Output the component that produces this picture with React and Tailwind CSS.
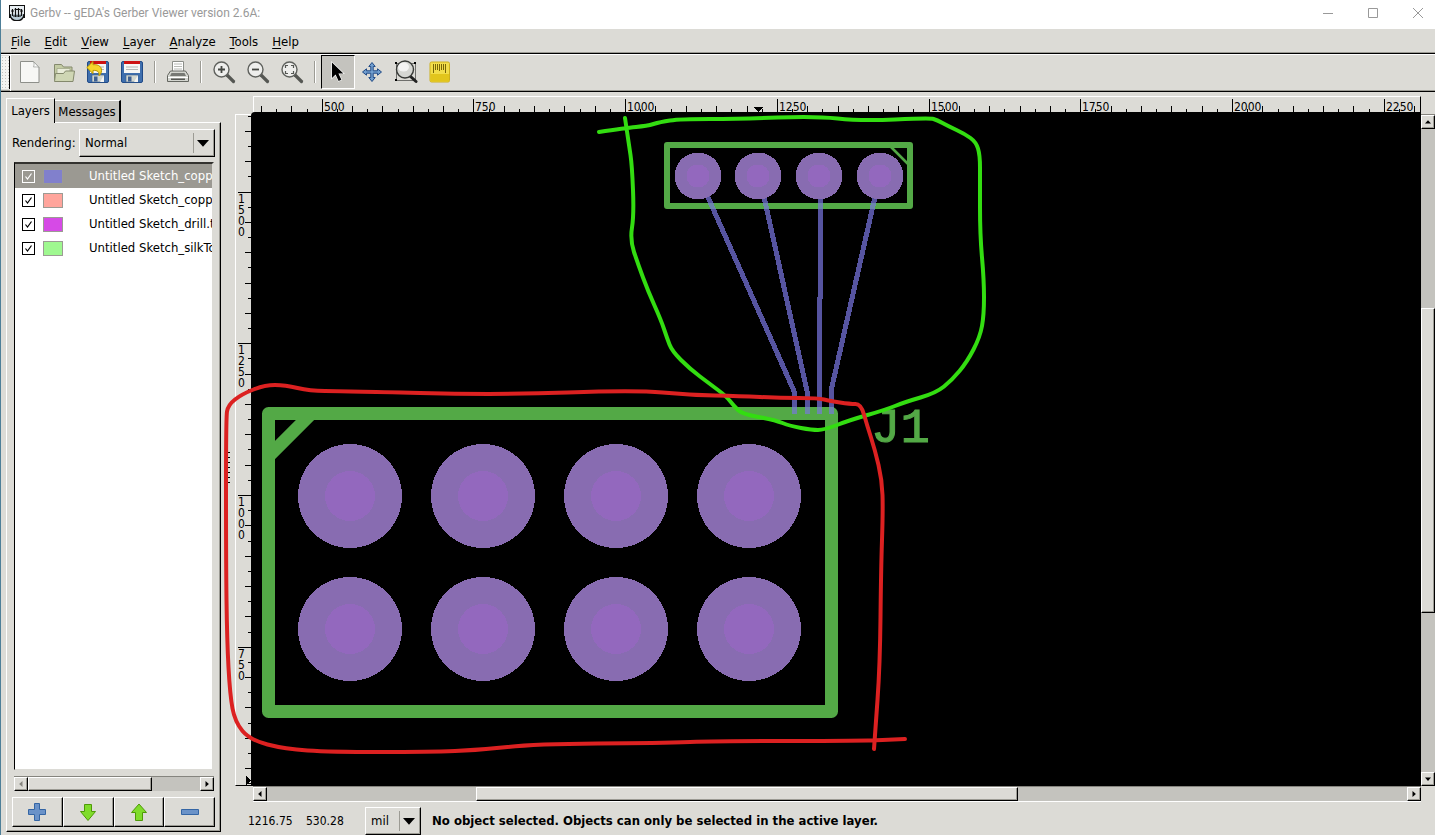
import { useState } from 'react'

const bevel =
  'bg-[#dcdbd6] border border-t-white border-l-white border-b-black border-r-black shadow-[inset_-1px_-1px_#9c9b94]'

const layers = [
  { name: 'Untitled Sketch_copper', swatch: 'bg-[#8180cc]' },
  { name: 'Untitled Sketch_copper', swatch: 'bg-[#ffa59c]' },
  { name: 'Untitled Sketch_drill.txt', swatch: 'bg-[#d64ae6]' },
  { name: 'Untitled Sketch_silkTop', swatch: 'bg-[#9ff890]' },
]

const menus = ['File', 'Edit', 'View', 'Layer', 'Analyze', 'Tools', 'Help']

// 25 mil between two ticks, in pixels
const TICK = 15.172

// freehand strokes, smoothed through the midpoints
function strokePath(points) {
  let d = `M${points[0][0]} ${points[0][1]}`
  for (let i = 1; i < points.length - 1; i++) {
    const [x, y] = points[i]
    const [nx, ny] = points[i + 1]
    d += ` Q${x} ${y} ${(x + nx) / 2} ${(y + ny) / 2}`
  }
  const last = points[points.length - 1]
  return `${d} L${last[0]} ${last[1]}`
}

const greenStroke = [
  [599, 132], [625, 128], [647, 126], [660, 122], [680, 119], [740, 119], [815, 116], [860, 121], [930, 118], [937, 120],
  [948, 126], [965, 134], [976, 142], [980, 155], [980, 180], [980, 235], [984, 280], [984, 315], [980, 337], [967, 362], [952, 380],
  [936, 393], [905, 402], [885, 410], [850, 420], [824, 430], [812, 430], [790, 426], [775, 420], [742, 414], [734, 406],
  [726, 396], [710, 384], [690, 369], [672, 351], [667, 338], [661, 320], [648, 291], [638, 264], [630, 240], [634, 215], [632, 165],
  [629, 145], [625, 118],
]

const redStroke = [
  [874, 749], [875, 735], [880, 665], [881, 570], [883, 510], [882, 480], [875, 450], [867, 425], [861, 404],
  [850, 404], [830, 401], [818, 398], [780, 398], [740, 396], [690, 395], [635, 390], [500, 395], [340, 391], [310, 391], [285, 385],
  [265, 385], [242, 394], [228, 405], [226, 418], [226, 560], [227, 640], [230, 695], [235, 722], [250, 740], [285, 749],
  [330, 752], [430, 752], [480, 750], [535, 744], [660, 743], [720, 741], [860, 741], [905, 739],
]

const traces = [
  'M707 195L794 391V414',
  'M764 197L807 391V414',
  'M820 198V299H819V414',
  'M875 197L831 391V414',
]

function Arrow({ dir = 'down', className = 'w-2 h-2' }) {
  const shapes = {
    down: 'M0 2h8L4 6.500z',
    up: 'M0 6h8L4 1.500z',
    left: 'M6 0v8L1.500 4z',
    right: 'M2 0v8L6.500 4z',
  }
  return (
    <svg viewBox="0 0 8 8" className={className} fill="currentColor">
      <path d={shapes[dir]} />
    </svg>
  )
}

function ScrollButton({ dir, dim }) {
  return (
    <button
      aria-label={`Scroll ${dir}`}
      className={`${bevel} w-3.5 h-3.5 shrink-0 flex items-center justify-center ${dim ? 'text-[#85847e]' : 'text-black'}`}
    >
      <Arrow dir={dir} className="w-1.5 h-1.5" />
    </button>
  )
}

function Dropdown({ label, options, className }) {
  return (
    <div className={`relative ${className}`}>
      <select aria-label={label} className={`${bevel} appearance-none w-full h-full pl-[5px] pr-6 outline-none`}>
        {options.map((o) => (
          <option key={o}>{o}</option>
        ))}
      </select>
      <span className="absolute right-1 inset-y-1 w-[18px] border-l border-[#9c9b94] flex items-center justify-center pointer-events-none">
        <Arrow className="w-3 h-3" />
      </span>
    </div>
  )
}

function Floppy() {
  return (
    <>
      <rect x="1.500" y="1.500" width="21" height="21" rx="1.500" fill="#3f6fae" stroke="#204a87" />
      <rect x="4" y="2" width="16" height="11" fill="#f6f6f4" />
      <rect x="4" y="1" width="16" height="3" fill="#cc1111" />
      <path d="M6 7h12M6 9.500h12" stroke="#b4b6b2" />
      <rect x="6" y="15" width="12" height="7" fill="#d3d7cf" stroke="#385d8c" strokeWidth=".6" />
      <rect x="8" y="16.500" width="3.500" height="5" fill="#3d5f91" />
      <path d="M14 22l4-7v7z" fill="#f4f4f2" />
    </>
  )
}

function Magnifier({ children }) {
  return (
    <>
      <path d="M15 15l6.500 6.500" stroke="#555753" strokeWidth="3.200" strokeLinecap="round" />
      <circle cx="9.500" cy="9.500" r="7.500" fill="#eeeeec" stroke="#5f615d" strokeWidth="1.400" />
      {children}
    </>
  )
}

const icons = {
  New: (
    <>
      <path d="M2.500 1.500h13l5.500 6v15h-18.500z" fill="#f7f7f5" stroke="#8d8f8a" />
      <path d="M15.500 1.500c1 2 .5 4 0 5.500 2 0 4-.3 5.500.5z" fill="#fff" stroke="#a0a29d" strokeWidth=".8" />
    </>
  ),
  Open: (
    <>
      <path d="M2.500 20V4.500h7l2 2.500h8.500v4" fill="#c3cba4" stroke="#84896d" />
      <path d="M5 8.500h13v5H5z" fill="#e9ecd9" stroke="#9a9f83" strokeWidth=".7" />
      <path d="M2.500 21.500l1-8h8l2-2.500h9l-1.500 10.500z" fill="#cfd6b4" stroke="#84896d" />
    </>
  ),
  Revert: (
    <>
      <Floppy />
      <path d="M.8 7.500L7 1.500v3.200c6-.5 9.500 2.500 8.300 7.500-.3 1.500-1.200 2.800-2.300 3.500.6-4-1.500-5.500-6-5.300v3.300z" fill="#f6d62c" stroke="#b89400" />
    </>
  ),
  Save: <Floppy />,
  Print: (
    <>
      <path d="M6.500 12V1.500h11V12" fill="#fff" stroke="#8c8e89" />
      <path d="M8 4h8M8 6.500h8M8 9h8" stroke="#b8bab5" />
      <path d="M4.500 11h15l3 4.500v6h-21v-6z" fill="#d3d5cf" stroke="#646660" />
      <path d="M5.500 13h13l1.500 3H4z" fill="#777974" />
      <path d="M2 17.500h20" stroke="#fff" />
      <rect x="5" y="18.500" width="14" height="1.500" fill="#555753" />
    </>
  ),
  'Zoom in': (
    <Magnifier>
      <path d="M9.500 6v7M6 9.500h7" stroke="#444642" strokeWidth="1.800" />
    </Magnifier>
  ),
  'Zoom out': (
    <Magnifier>
      <path d="M6 9.500h7" stroke="#444642" strokeWidth="1.800" />
    </Magnifier>
  ),
  'Zoom to fit': (
    <Magnifier>
      <path d="M5.500 8V5.500H8M11 5.500h2.500V8M13.500 11v2.500H11M8 13.500H5.500V11" fill="none" stroke="#555753" strokeWidth="1.200" />
    </Magnifier>
  ),
  Select: (
    <path d="M6 2.500v15.500l3.600-3.400 3 6.400 2.800-1.300-3-6.200h5z" fill="#000" stroke="#fff" strokeWidth="1.200" paintOrder="stroke" />
  ),
  Pan: (
    <path
      d="M12 2.500l3.200 4h-2v4.300h4.300v-2l4 3.200-4 3.200v-2h-4.300v4.300h2l-3.200 4-3.200-4h2v-4.300H6.500v2l-4-3.200 4-3.200v2h4.300V6.500h-2z"
      fill="#729fcf"
      stroke="#204a87"
    />
  ),
  'Zoom to area': (
    <>
      <path d="M2.500 3.500h19v17h-19z" fill="none" stroke="#000" strokeDasharray="1 1" />
      <path d="M1 2h2v2H1zM20 2h2v2h-2zM1 19h2v2H1z" fill="#000" />
      <path d="M16 16l6 5.500" stroke="#222" strokeWidth="3" strokeLinecap="round" />
      <circle cx="11" cy="9.500" r="8.500" fill="#d6d7d3" stroke="#383a37" strokeWidth="1.400" />
      <ellipse cx="9.500" cy="7" rx="5.500" ry="4.500" fill="#fff" opacity=".7" />
    </>
  ),
  Measure: (
    <>
      <rect x="2" y="2" width="19.500" height="20" rx="1.500" fill="#f2dd4a" stroke="#cdb01c" />
      <path d="M2.500 14H21v7.500H2.500z" fill="#e2c51c" />
      <path d="M5.500 4v9M7.500 4v6M9.500 4v6M11.500 4v7M13.500 4v6M15.500 4v6M17.500 4v9" stroke="#6a5700" strokeWidth=".9" />
    </>
  ),
}

const toolbarGroups = [
  ['New', 'Open', 'Revert', 'Save'],
  ['Print'],
  ['Zoom in', 'Zoom out', 'Zoom to fit'],
  ['Select', 'Pan', 'Zoom to area', 'Measure'],
]

function Toolbar({ tool, setTool }) {
  return (
    <div className="flex h-[39px] border-t border-black border-b border-b-black shadow-[inset_0_1px_#fff,inset_0_-1px_#9c9b94]">
      <div className="w-[9px] my-0.5 bg-[radial-gradient(#c4c3be_30%,#f4f4f1_35%)] bg-[length:3px_3px] border-r border-black" />
      <div className="flex items-center border-l border-white pl-0.5 pb-px">
        {toolbarGroups.map((group, i) => (
          <div key={i} className="flex items-center">
            {i > 0 && <span className="mx-[5px] w-0.5 h-[22px] border-l border-r border-l-[#9c9b94] border-r-white" />}
            {group.map((name) => (
              <button
                key={name}
                aria-label={name}
                onClick={() => setTool(name)}
                className={`w-[34px] h-[34px] flex items-center justify-center border ${
                  tool === name
                    ? 'bg-[#c4c3be] border-t-black border-l-black border-b-white border-r-white'
                    : 'border-transparent'
                }`}
              >
                <svg viewBox="0 0 24 24" className="w-6 h-6" fill="none">
                  {icons[name]}
                </svg>
              </button>
            ))}
          </div>
        ))}
      </div>
    </div>
  )
}

function TitleBar() {
  return (
    <header className="flex items-center h-[29px] bg-white text-[#999] shrink-0">
      <svg viewBox="0 0 16 16" className="w-4 h-4 ml-2 mb-1" fill="none">
        <rect x=".5" y=".5" width="15" height="12" fill="#e8eef2" stroke="#111" />
        <path d="M1 9c0 9 14 9 14 0" fill="#b9cbd6" stroke="#111" strokeWidth="1.500" />
        <path d="M3.500 4v7M6.500 3v9M9.500 3v9M12.500 4v7M2 6h3M5.500 4.500h3M8.500 4.500h3M11 6h3M4 11h8" stroke="#111" strokeWidth="1.200" />
      </svg>
      <h1 className="ml-[5px] mb-1 text-xs font-[Roboto,sans-serif]">Gerbv -- gEDA's Gerber Viewer version 2.6A:</h1>
      <div className="ml-auto mb-1 flex">
        <button aria-label="Minimize" className="w-[45px] h-6 flex items-center justify-center">
          <svg viewBox="0 0 10 10" className="w-2.5 h-2.5" stroke="currentColor"><path d="M0 5.500h10" /></svg>
        </button>
        <button aria-label="Maximize" className="w-[45px] h-6 flex items-center justify-center">
          <svg viewBox="0 0 10 10" className="w-2.5 h-2.5" stroke="currentColor" fill="none"><path d="M.5.5h9v9h-9z" /></svg>
        </button>
        <button aria-label="Close" className="w-10 h-6 pl-1.5 flex items-center justify-center">
          <svg viewBox="0 0 10 10" className="w-2.5 h-2.5" stroke="currentColor"><path d="M0 0l10 10M10 0L0 10" /></svg>
        </button>
      </div>
    </header>
  )
}

function LayerRow({ layer, selected, onSelect }) {
  const [visible, setVisible] = useState(true)
  return (
    <li
      onClick={onSelect}
      className={`flex items-center h-6 pl-[7px] whitespace-nowrap ${selected ? 'bg-[#9b9992] text-white' : ''}`}
    >
      <label className="flex items-center">
        <span className="relative w-[13px] h-[13px] shrink-0">
          <input
            type="checkbox"
            checked={visible}
            onChange={(e) => setVisible(e.target.checked)}
            className="peer appearance-none block w-full h-full border border-current"
          />
          <svg viewBox="0 0 13 13" className="absolute inset-0 hidden peer-checked:block pointer-events-none" fill="none">
            <path d="M3.500 6.500L5.500 9 9.500 3.500" stroke="currentColor" strokeWidth="1.200" />
          </svg>
        </span>
        <span className={`w-5 h-[15px] ml-2 mr-[26px] shrink-0 border border-[#9c9b94] ${layer.swatch}`} />
        {layer.name}
      </label>
    </li>
  )
}

function Sidebar() {
  const [selected, setSelected] = useState(0)
  return (
    <aside className="flex flex-col w-[220px] shrink-0 pl-[5px] pt-1.5 pb-[3px]">
      <div className="flex items-end h-6">
        <button className="relative z-10 h-[25px] -mb-px w-[49px] bg-[#dcdbd6] border-t border-l border-white border-r border-r-black">
          Layers
        </button>
        <button className="h-[22px] w-[66px] bg-[#c4c3be] border-t border-white border-r-2 border-r-black">Messages</button>
      </div>
      <div className="flex flex-col flex-1 min-h-0 border border-l-white border-t-white border-b-black border-r-black shadow-[inset_-1px_-1px_#9c9b94] px-[5px] pt-1.5 pb-1">
        <div className="flex items-center justify-between">
          <span>Rendering:</span>
          <Dropdown label="Rendering" options={['Normal', 'XOR', 'High quality']} className="w-[136px] h-7" />
        </div>
        <div className="flex flex-col flex-1 min-h-0 mt-[5px] ml-0.5 mr-px">
          <ul className="flex-1 min-h-0 overflow-hidden bg-white border-t-2 border-t-[#33322f] border-l border-l-black border-r-2 border-r-[#dcdbd6] border-b border-b-[#dcdbd6]">
            {layers.map((l, i) => (
              <LayerRow key={i} layer={l} selected={i === selected} onSelect={() => setSelected(i)} />
            ))}
          </ul>
          <div className="flex mt-1.5 bg-[#c4c3be] border-t border-[#85847e]">
            <ScrollButton dir="left" dim />
            <div className={`${bevel} flex-[121]`} />
            <div className="flex-[48]" />
            <ScrollButton dir="right" />
          </div>
        </div>
        <div className="grid grid-cols-4 mt-1.5 h-[30px]">
          <button aria-label="Add layer" className={`${bevel} flex items-center justify-center`}>
            <svg viewBox="0 0 20 20" className="w-5 h-5"><path d="M7.500 1.500h5v6h6v5h-6v6h-5v-6h-6v-5h6z" fill="#6a92c8" stroke="#3465a4" /></svg>
          </button>
          <button aria-label="Move layer down" className={`${bevel} flex items-center justify-center`}>
            <svg viewBox="0 0 20 20" className="w-5 h-5"><path d="M6.500 2.500h7v7h4L10 18.500 2.500 9.500h4z" fill="#7fdc2b" stroke="#4e9a06" /></svg>
          </button>
          <button aria-label="Move layer up" className={`${bevel} flex items-center justify-center`}>
            <svg viewBox="0 0 20 20" className="w-5 h-5"><path d="M6.500 18.500h7v-8h4L10 2 2.500 10.500h4z" fill="#7fdc2b" stroke="#4e9a06" /></svg>
          </button>
          <button aria-label="Remove layer" className={`${bevel} flex items-center justify-center`}>
            <svg viewBox="0 0 20 20" className="w-5 h-5"><path d="M1.500 7.500h17v5h-17z" fill="#6a92c8" stroke="#3465a4" /></svg>
          </button>
        </div>
      </div>
    </aside>
  )
}

function TopRuler() {
  const ticks = Array.from({ length: 200 }, (_, i) => ({ mil: 400 + i * 25, x: Math.round(7 + i * TICK) }))
  return (
    <div className="ml-0.5 h-4 border-t border-l border-white border-r border-r-black overflow-hidden">
      <svg className="block w-full h-[15px]" shapeRendering="crispEdges">
        {ticks.map(({ mil, x }) => {
          const h = mil % 250 === 0 ? 13 : mil % 50 === 0 ? 6 : 3
          return <rect key={mil} x={x} y={15 - h} width="1" height={h} />
        })}
        {ticks.filter((t) => t.mil % 250 === 0 && t.mil < 2500).map(({ mil, x }) => (
          <text key={mil} x={x + 2} y="14" fontSize="12">{mil}</text>
        ))}
        <path d="M499 10h10l-5 5z" />
      </svg>
    </div>
  )
}

function SideRuler() {
  const ticks = Array.from({ length: 100 }, (_, i) => ({ mil: 1625 - i * 25, y: Math.round(0.7 + i * TICK) }))
  return (
    <div className="mt-0.5 border-t border-l border-white border-b border-b-black relative overflow-hidden">
      <svg className="absolute inset-0 w-full h-full" shapeRendering="crispEdges">
        {ticks.map(({ mil, y }) => {
          const w = mil % 250 === 0 ? 13 : mil % 50 === 0 ? 6 : 3
          return <rect key={mil} x={15 - w} y={y} width={w} height="1" />
        })}
        {ticks.filter((t) => t.mil % 250 === 0 && t.mil > 500).map(({ mil, y }) =>
          String(mil).split('').map((c, i) => (
            <text key={`${mil}-${i}`} x="2" y={y + 11 + i * 11} fontSize="12">{c}</text>
          )),
        )}
        <path d="M10 661v9l5-4z" />
      </svg>
    </div>
  )
}

function Board() {
  return (
    <div className="relative bg-black rounded-tl-sm z-10">
      <svg className="absolute inset-0 w-full h-full overflow-visible pointer-events-none" fill="none">
        <g transform="translate(-251 -112)">
          <defs>
            <clipPath id="silk">
              <path d="M664 203h249v6H664zM262 407h576v13H262z" />
            </clipPath>
          </defs>
          <g stroke="#53a946" strokeLinejoin="round">
            <rect x="667" y="145" width="243" height="61" strokeWidth="6" />
            <path d="M890 146l20 20" strokeWidth="2.500" />
            <rect x="268.500" y="413.500" width="563" height="298" strokeWidth="13" />
            <path d="M311 414L269 456" strokeWidth="13" />
          </g>
          <text x="871" y="442" fontSize="49" fill="#53a946" stroke="#53a946" fontFamily="'Liberation Mono', monospace">J1</text>
          <g shapeRendering="crispEdges">
            {traces.map((d) => (
              <g key={d} strokeWidth="5" strokeLinejoin="round">
                <path d={d} stroke="#5654a0" />
                <path d={d} stroke="#6c87ad" clipPath="url(#silk)" />
              </g>
            ))}
            {[698, 758, 819, 880].map((x) => (
              <g key={x}>
                <circle cx={x} cy="176" r="23.500" fill="#886cb1" />
                <circle cx={x} cy="176" r="11.500" fill="#9368be" />
              </g>
            ))}
            {[496, 629].map((y) =>
              [350, 483, 616, 749].map((x) => (
                <g key={`${x}-${y}`}>
                  <circle cx={x} cy={y} r="52" fill="#886cb1" />
                  <circle cx={x} cy={y} r="25" fill="#9368be" />
                </g>
              )),
            )}
          </g>
          <g strokeWidth="4" strokeLinecap="round" strokeLinejoin="round">
            <path d={strokePath(greenStroke)} stroke="#33dd11" />
            <path d={strokePath(redStroke)} stroke="#dc2121" />
          </g>
        </g>
      </svg>
    </div>
  )
}

export default function App() {
  const [tool, setTool] = useState('Select')

  return (
    <div className="min-h-screen flex flex-col bg-[#dcdbd6] border-l border-[#4e7f98] text-black text-[13px] leading-4 font-['DejaVu_Sans_Condensed','DejaVu_Sans',sans-serif]">
      <TitleBar />
      <nav className="flex items-center h-6 pl-[3px] pt-px shadow-[inset_0_-1px_#9c9b94]">
        {menus.map((m) => (
          <button key={m} className="px-[7px]">
            <span className="underline underline-offset-2">{m[0]}</span>
            {m.slice(1)}
          </button>
        ))}
      </nav>
      <Toolbar tool={tool} setTool={setTool} />

      <div className="flex flex-1">
        <Sidebar />

        {/* pane handle */}
        <div className="w-3.5 shrink-0 flex items-center justify-center pt-2 pl-0.5">
          <div className="w-0.5 h-8 bg-[repeating-linear-gradient(#000_0_1px,transparent_1px_5px)]" />
        </div>

        <main className="flex-1 flex flex-col min-w-0 pt-1">
          <div className="flex-1 grid grid-cols-[16px_1fr_14px] grid-rows-[16px_1fr_16px]">
            <div />
            <TopRuler />
            <div />
            <SideRuler />
            <Board />
            <div className="mt-0.5 flex flex-col bg-[#c4c3be] border-t border-[#85847e]">
              <ScrollButton dir="up" />
              <div className="flex-[180]" />
              <div className={`${bevel} flex-[303]`} />
              <div className="flex-[160]" />
              <ScrollButton dir="down" />
            </div>
            <div />
            <div className="ml-0.5 flex bg-[#c4c3be] border-t border-t-[#85847e] border-b border-b-white">
              <ScrollButton dir="left" />
              <div className="flex-[209]" />
              <div className={`${bevel} flex-[540]`} />
              <div className="flex-[389]" />
              <ScrollButton dir="right" />
            </div>
            <div />
          </div>

          <footer className="flex items-center h-[33px] pl-[13px] pt-1">
            <output className="w-[58px] text-xs">1216.75</output>
            <output className="w-[59px] text-xs">530.28</output>
            <Dropdown label="Units" options={['mil', 'mm', 'in']} className="w-14 h-7" />
            <p className="ml-[11px] font-bold">
              No object selected. Objects can only be selected in the active layer.
            </p>
          </footer>
        </main>
      </div>
    </div>
  )
}
